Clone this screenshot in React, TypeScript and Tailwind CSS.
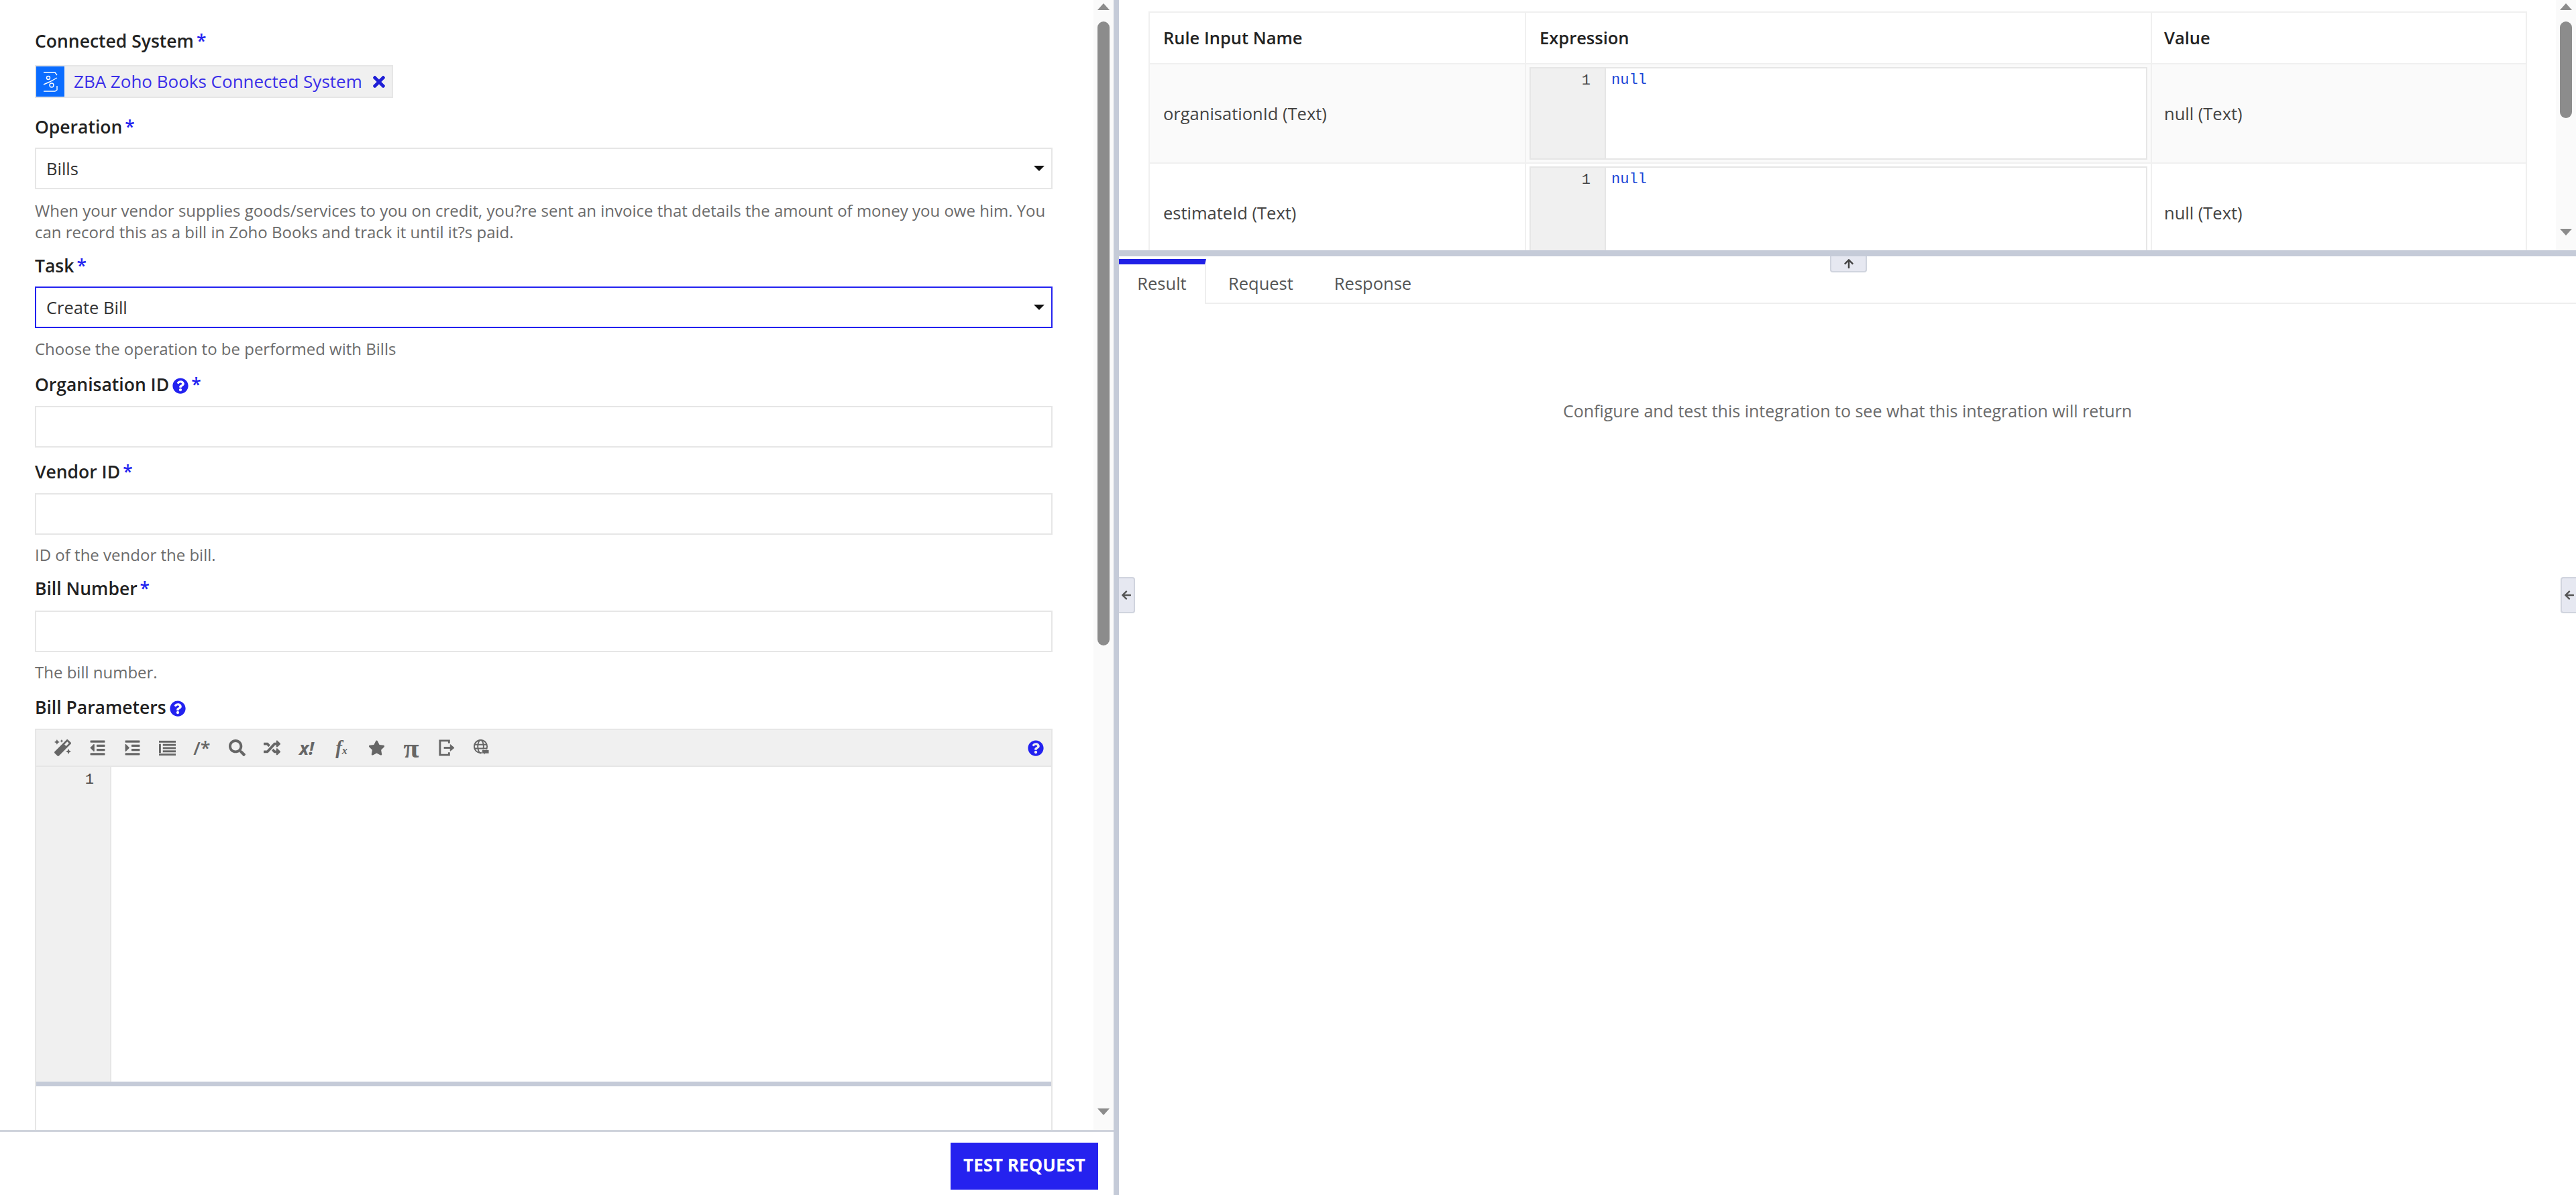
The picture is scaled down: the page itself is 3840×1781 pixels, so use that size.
import { ReactNode } from "react";
import {
  FaArrowLeft,
  FaArrowUp,
  FaIndent,
  FaMagic,
  FaOutdent,
  FaQuestionCircle,
  FaRandom,
  FaSearch,
  FaStar,
  FaTimes,
} from "react-icons/fa";

const font = { fontFamily: '"Open Sans", sans-serif' };

function Required() {
  return <span className="ml-[4px] text-[#2322f0]">*</span>;
}

function Help() {
  return <FaQuestionCircle className="ml-[5px] inline-block h-[24px] w-[24px] align-[-4px] text-[#2322f0]" />;
}

function Label({ children, className }: { children: ReactNode; className: string }) {
  return <div className={`h-[32px] text-[26.5px] leading-[32px] font-semibold text-[#222] ${className}`}>{children}</div>;
}

function Hint({ children, className }: { children: ReactNode; className: string }) {
  return <div className={`text-[24px] leading-[32px] text-[#6b6b6b] ${className}`}>{children}</div>;
}

function Select({ value, focused, className }: { value: string; focused?: boolean; className: string }) {
  return (
    <div
      className={`flex h-[62px] items-center justify-between pl-[15px] pr-[10px] text-[25.5px] text-[#333] ${
        focused ? "border-2 border-[#2322f0]" : "border-2 border-[#e6e6e6]"
      } ${className}`}
    >
      {value}
      <span className="h-0 w-0 border-x-8 border-t-8 border-x-transparent border-t-[#111]" />
    </div>
  );
}

function TextInput({ className }: { className: string }) {
  return <div className={`h-[62px] border-2 border-[#e6e6e6] bg-white ${className}`} />;
}

function Scrollbar({ className }: { className: string }) {
  return (
    <div className={`flex w-[30px] shrink-0 flex-col items-center bg-[#fafafa] ${className}`}>
      <span className="mt-[5px] h-0 w-0 border-x-[9px] border-b-[10px] border-x-transparent border-b-[#8c8c8c]" />
      <span className="mt-[17px] w-[18px] flex-none rounded-full bg-[#8c8c8c] [height:var(--thumb)]" />
      <span className="mt-auto mb-[22px] h-0 w-0 border-x-[9px] border-t-[10px] border-x-transparent border-t-[#8c8c8c]" />
    </div>
  );
}

function ToolIcon({ children }: { children: ReactNode }) {
  return <span className="flex w-[52px] shrink-0 items-center justify-center text-[#666]">{children}</span>;
}

function Toolbar() {
  const cls = "h-[25px] w-[25px]";
  return (
    <div className="flex h-[55px] items-center border-b-2 border-[#e6e6e6] bg-[#f0f0f0] pl-[13px] pr-[11px]">
      <ToolIcon><FaMagic className={cls} /></ToolIcon>
      <ToolIcon><FaOutdent className={cls} /></ToolIcon>
      <ToolIcon><FaIndent className={cls} /></ToolIcon>
      <ToolIcon>
        <svg viewBox="0 0 26 26" className={cls} fill="currentColor">
          <rect x="0" y="2" width="26" height="3" />
          <rect x="0" y="7" width="3" height="14" />
          <rect x="6" y="7" width="20" height="3" />
          <rect x="6" y="12" width="20" height="3" />
          <rect x="6" y="17" width="20" height="3" />
          <rect x="0" y="22" width="26" height="3" />
        </svg>
      </ToolIcon>
      <ToolIcon><span className="text-[27px] leading-none font-semibold">/*</span></ToolIcon>
      <ToolIcon><FaSearch className={cls} /></ToolIcon>
      <ToolIcon><FaRandom className={cls} /></ToolIcon>
      <ToolIcon><span className="text-[27px] leading-none font-bold italic">x!</span></ToolIcon>
      <ToolIcon>
        <span className="font-['Liberation_Serif'] text-[29px] leading-none font-bold italic">
          f<span className="text-[16px]">x</span>
        </span>
      </ToolIcon>
      <ToolIcon><FaStar className={cls} /></ToolIcon>
      <ToolIcon><span className="font-['Liberation_Serif'] text-[42px] leading-[30px] font-bold">π</span></ToolIcon>
      <ToolIcon>
        <svg viewBox="0 0 26 26" className={cls} fill="none" stroke="currentColor" strokeWidth="3">
          <path d="M17 6V2H3v22h14v-4" />
          <path d="M9 13h12" />
          <path d="M19 8l6 5-6 5z" fill="currentColor" strokeWidth="1" />
        </svg>
      </ToolIcon>
      <ToolIcon>
        <svg viewBox="0 0 26 26" className={cls} fill="none" stroke="currentColor" strokeWidth="2">
          <circle cx="12" cy="11" r="10" />
          <ellipse cx="12" cy="11" rx="4.5" ry="10" />
          <path d="M2 8h20M2 14h20" />
          <path d="M14 16h11v6h-6l-2 3v-3h-3z" fill="currentColor" stroke="#f0f0f0" strokeWidth="1" />
        </svg>
      </ToolIcon>
      <FaQuestionCircle className="ml-auto h-[24px] w-[24px] text-[#2322f0]" />
    </div>
  );
}

function ConnectedChip() {
  return (
    <div className="mt-[20px] flex h-[49px] w-[534px] items-center border-2 border-[#e6e6e6] bg-[#f0f0f0]">
      <span className="flex h-full w-[42px] shrink-0 items-center justify-center bg-[#0a6cff]">
        <svg viewBox="0 0 26 32" className="h-[32px] w-[26px]" fill="none" stroke="#fff" strokeWidth="1.4">
          <path d="M3 2h17l3 4M23 22v6l-3 2H3" />
          <path d="M3 20l9-4 11-6" />
          <circle cx="10" cy="10" r="2.5" />
          <circle cx="15" cy="21" r="3" />
        </svg>
      </span>
      <span className="ml-[14px] text-[26px] whitespace-nowrap text-[#3a2ee8]">ZBA Zoho Books Connected System</span>
      <FaTimes className="ml-auto mr-[6px] h-[26px] w-[26px] shrink-0 text-[#1f1fd6]" />
    </div>
  );
}

function LeftPane() {
  return (
    <div className="flex h-full w-[1660px] shrink-0 flex-col bg-white">
      <div className="flex min-h-0 flex-1 overflow-hidden">
        <div className="w-[1630px] shrink-0 pt-[45px] pl-[52px] pr-[61px]">
          <Label className="">Connected System<Required /></Label>
          <ConnectedChip />
          <Label className="mt-[27px]">Operation<Required /></Label>
          <Select value="Bills" className="mt-[15px]" />
          <Hint className="mt-[16px]">
            When your vendor supplies goods/services to you on credit, you?re sent an invoice that details the amount of money you owe him. You can record this as a bill in Zoho Books and track it until it?s paid.
          </Hint>
          <Label className="mt-[18px]">Task<Required /></Label>
          <Select value="Create Bill" focused className="mt-[15px]" />
          <Hint className="mt-[15px]">Choose the operation to be performed with Bills</Hint>
          <Label className="mt-[21px]">Organisation ID<Help /><Required /></Label>
          <TextInput className="mt-[16px]" />
          <Label className="mt-[20px]">Vendor ID<Required /></Label>
          <TextInput className="mt-[16px]" />
          <Hint className="mt-[14px]">ID of the vendor the bill.</Hint>
          <Label className="mt-[18px]">Bill Number<Required /></Label>
          <TextInput className="mt-[17px]" />
          <Hint className="mt-[14px]">The bill number.</Hint>
          <Label className="mt-[20px]">Bill Parameters<Help /></Label>
          <div className="mt-[16px] border-x-2 border-t-2 border-[#e6e6e6]">
            <Toolbar />
            <div className="flex h-[469px]">
              <div className="w-[110px] bg-[#f0f0f0] pt-[6px] pr-[24px] text-right font-['Liberation_Mono'] text-[22px] leading-[28px] text-[#444]">1</div>
              <div className="flex-1 border-l-2 border-[#e6e6e6] bg-white" />
            </div>
            <div className="h-[7px] bg-[#c5cbd8]" />
            <div className="h-[100px]" />
          </div>
        </div>
        <Scrollbar className="[--thumb:930px]" />
      </div>
      <div className="flex h-[97px] shrink-0 justify-end border-t-[3px] border-[#cfd3dc] pt-[16px] pr-[23px]">
        <button className="h-[70px] w-[220px] bg-[#2522ef] pb-[3px] text-[26px] font-bold text-white">TEST REQUEST</button>
      </div>
    </div>
  );
}

function CodeCell() {
  return (
    <div className="flex h-[138px] border-2 border-[#e6e6e6] bg-white font-['Liberation_Mono'] text-[22px] leading-[28px]">
      <div className="w-[110px] bg-[#f0f0f0] pt-[5px] pr-[21px] text-right text-[#444]">1</div>
      <div className="flex-1 border-l-2 border-[#e6e6e6] pt-[4px] pl-[8px] text-[#1a45d6]">null</div>
    </div>
  );
}

function RulesTable() {
  const rows = [
    { name: "organisationId (Text)", bg: "bg-[#fafafa]" },
    { name: "estimateId (Text)", bg: "bg-white" },
  ];
  return (
    <table className="h-fit w-[2053px] shrink-0 table-fixed border-collapse text-[25.5px] text-[#444]">
      <colgroup>
        <col className="w-[561px]" />
        <col className="w-[933px]" />
        <col className="w-[559px]" />
      </colgroup>
      <thead>
        <tr className="h-[77px] text-left text-[#222]">
          <th className="border-2 border-[#f0f0f0] pl-[20px] font-semibold">Rule Input Name</th>
          <th className="border-2 border-[#f0f0f0] pl-[20px] font-semibold">Expression</th>
          <th className="border-2 border-[#f0f0f0] pl-[18px] font-semibold">Value</th>
        </tr>
      </thead>
      <tbody>
        {rows.map((r) => (
          <tr key={r.name} className={`h-[148px] ${r.bg}`}>
            <td className="border-2 border-[#f0f0f0] pl-[20px]">{r.name}</td>
            <td className="border-2 border-[#f0f0f0] px-[5px]"><CodeCell /></td>
            <td className="border-2 border-[#f0f0f0] pl-[18px]">null (Text)</td>
          </tr>
        ))}
      </tbody>
    </table>
  );
}

function RightPane() {
  return (
    <div className="relative flex h-full min-w-0 flex-1 flex-col bg-white">
      <div className="flex h-[373px] shrink-0 overflow-hidden pt-[17px] pl-[44px]">
        <RulesTable />
        <Scrollbar className="ml-auto -mt-[17px] h-[373px] [--thumb:144px]" />
      </div>
      <div className="h-[9px] shrink-0 bg-[#c5cbd8]" />
      <div className="flex h-[71px] shrink-0 items-stretch pt-[4px] text-[25.5px] text-[#555]">
        <div className="flex w-[130px] items-center justify-center border-t-8 border-r-2 border-t-[#2020e6] border-r-[#eee] pb-[2px]">Result</div>
        <div className="flex flex-1 items-center gap-[61px] border-b-2 border-[#eee] pt-[8px] pl-[33px]">
          <span>Request</span>
          <span>Response</span>
        </div>
      </div>
      <div className="mt-[143px] text-center text-[25px] leading-[32px] text-[#6b6b6b]">
        Configure and test this integration to see what this integration will return
      </div>
      <div className="absolute top-[382px] left-[1060px] flex h-[24px] w-[55px] items-center justify-center rounded-b-[4px] border-x-2 border-b-2 border-[#d0d4de] bg-[#e6e8f1]">
        <FaArrowUp className="h-[16px] w-[16px] text-[#444]" />
      </div>
      <div className="absolute top-[860px] left-0 flex h-[54px] w-[24px] items-center justify-center rounded-r-[4px] border-y-2 border-r-2 border-[#d0d4de] bg-[#e6e8f1]">
        <FaArrowLeft className="h-[16px] w-[16px] text-[#555]" />
      </div>
      <div className="absolute top-[860px] right-0 flex h-[54px] w-[23px] items-center justify-center rounded-l-[4px] border-y-2 border-l-2 border-[#d0d4de] bg-[#e6e8f1]">
        <FaArrowLeft className="h-[16px] w-[16px] text-[#555]" />
      </div>
    </div>
  );
}

export default function App() {
  return (
    <div className="flex h-[1781px] w-[3840px] overflow-hidden bg-white" style={font}>
      <LeftPane />
      <div className="w-[8px] shrink-0 bg-[#c5cbd8]" />
      <RightPane />
    </div>
  );
}
